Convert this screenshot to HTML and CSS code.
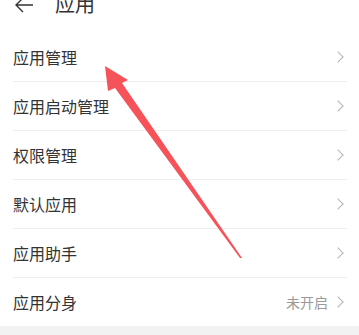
FILE: index.html
```html
<!DOCTYPE html>
<html lang="zh">
<head>
    <meta charset="UTF-8">
    <meta name="viewport" content="width=device-width, initial-scale=1.0">
    <title>应用</title>
    <link rel="stylesheet" href="styles.css">
</head>
<body>
    <div class="page">
        <div class="header">
            <svg class="back" width="20" height="16" viewBox="0 0 20 16">
                <path d="M19 7H2M9 0L2 7l7 7" fill="none" stroke="#333" stroke-width="1.4"/>
            </svg>
            <span class="title">应用</span>
        </div>
        <div class="list">
            <div class="row"><span class="label">应用管理</span><span class="chev"></span></div>
            <div class="row"><span class="label">应用启动管理</span><span class="chev"></span></div>
            <div class="row"><span class="label">权限管理</span><span class="chev"></span></div>
            <div class="row"><span class="label">默认应用</span><span class="chev"></span></div>
            <div class="row"><span class="label">应用助手</span><span class="chev"></span></div>
            <div class="row last"><span class="label">应用分身</span><span class="value">未开启</span><span class="chev"></span></div>
        </div>
        <div class="footer"></div>

        <!-- 标注箭头 -->
        <svg class="arrow" width="359" height="335" viewBox="0 0 359 335">
            <polygon points="105,66 128,80 122,83 242,258 240,258 115,88 108,91" fill="#f6525a"/>
        </svg>
    </div>
</body>
</html>
```

FILE: styles.css
```css
body {
    margin: 0;
    background-color: #fff;
    font-family: "Noto Sans CJK SC", "Noto Sans", sans-serif;
}

.page {
    position: relative;
    width: 359px;
    height: 335px;
    overflow: hidden;
}

.header {
    height: 33px;
    display: flex;
    align-items: flex-start;
    color: #333;
}

.back {
    margin-top: -2px;
    margin-left: 14px;
}

.title {
    font-size: 20px;
    line-height: 22px;
    margin-top: -7px;
    margin-left: 21px;
}

.list {
    padding: 0 12px 0 13px;
}

.row {
    height: 48px;
    display: flex;
    align-items: center;
    border-bottom: 1px solid #eeeeee;
}

.row.last {
    border-bottom: none;
}

.label {
    flex: 1;
    font-size: 16px;
    color: #333;
}

.value {
    font-size: 14px;
    color: #999;
    margin-right: 6px;
}

.chev {
    width: 7px;
    height: 7px;
    border-top: 1px solid #b5b5b5;
    border-right: 1px solid #b5b5b5;
    transform: rotate(45deg);
    margin-right: 5px;
}

.footer {
    height: 10px;
    background-color: #f2f2f2;
}

.arrow {
    position: absolute;
    left: 0;
    top: 0;
}
```
